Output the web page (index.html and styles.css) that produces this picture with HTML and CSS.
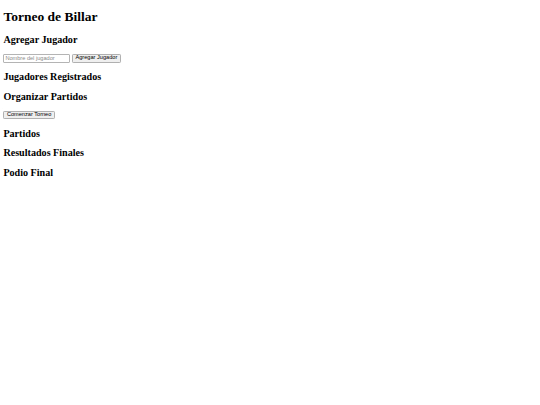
FILE: index.html
```html
<!DOCTYPE html>
<html lang="es">
<head>
<meta charset="utf-8">
<title>Torneo de Billar</title>
<link rel="stylesheet" href="styles.css">
</head>
<body>
<h1>Torneo de Billar</h1>
<h2>Agregar Jugador</h2>
<div class="form-row">
<input type="text" class="field" placeholder="Nombre del jugador">
<button class="btn">Agregar Jugador</button>
</div>
<h2>Jugadores Registrados</h2>
<ul class="list"></ul>
<h2>Organizar Partidos</h2>
<button class="btn">Comenzar Torneo</button>
<h2>Partidos</h2>
<div class="matches"></div>
<h2>Resultados Finales</h2>
<div class="results"></div>
<h2>Podio Final</h2>
<div class="podium"></div>
</body>
</html>
```

FILE: styles.css
```css
html, body {
  background: #ffffff;
}
body {
  margin: 3.375px;
  font-family: "Liberation Serif", "Times New Roman", serif;
  font-size: 6.75px;
  color: #000000;
}
h1 {
  font-size: 13.5px;
  margin: 6px 0 9.05px;
  font-weight: bold;
}
h2 {
  font-size: 10.125px;
  margin: 8.4px 0 8.6px;
  font-weight: bold;
}
.list {
  margin: 6.75px 0;
  padding: 0;
}
.form-row {
  display: flex;
  align-items: center;
  gap: 1.6px;
}
.field {
  box-sizing: border-box;
  width: 67px;
  height: 8.5px;
  margin: 0;
  padding: 0 1px;
  font-family: "Liberation Sans", Arial, sans-serif;
  font-size: 5.625px;
  border: 1px solid #b4b4b4;
  border-radius: 1px;
  background: #ffffff;
  outline: none;
}
.field::placeholder {
  color: #8a8a8a;
}
.btn {
  box-sizing: border-box;
  height: 8.5px;
  margin: 0;
  padding: 0 2.5px;
  font-family: "Liberation Sans", Arial, sans-serif;
  font-size: 5.625px;
  line-height: 1;
  color: #000000;
  background: #efefef;
  border: 1px solid #b0b0b0;
  border-radius: 1.2px;
}
```
